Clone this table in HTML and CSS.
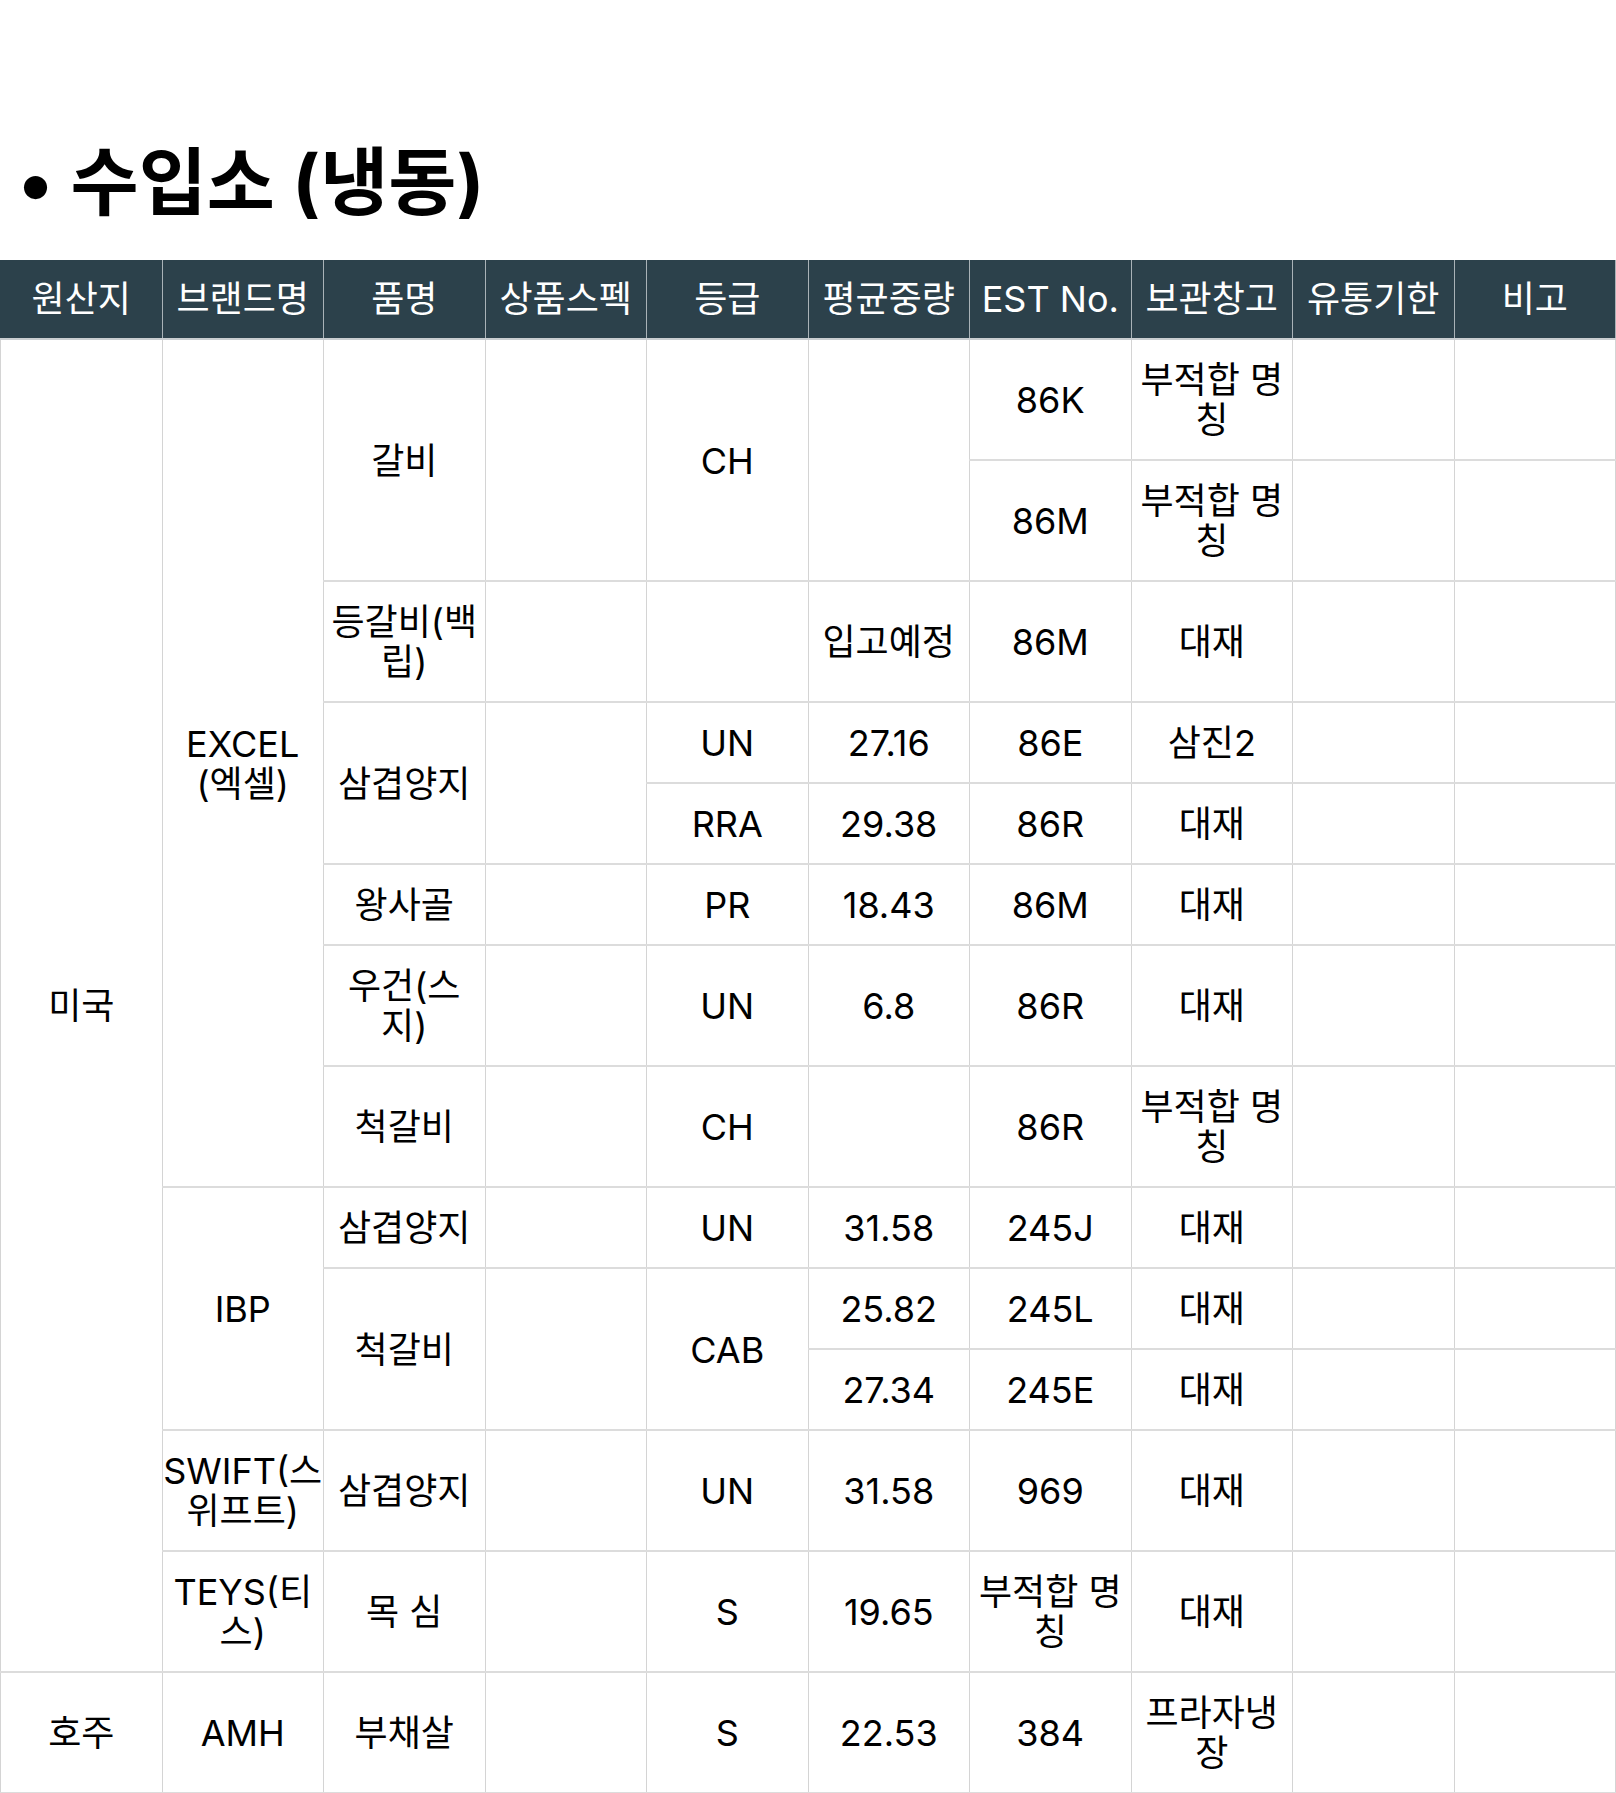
FILE: index.html
```html
<!DOCTYPE html>
<html lang="ko">
<head>
<meta charset="utf-8">
<title>수입소 (냉동)</title>
<link rel="stylesheet" href="styles.css">
</head>
<body>
<h2 class="title">• 수입소 (냉동)</h2>
<table class="stock">
  <colgroup>
    <col><col><col><col><col><col><col><col><col><col>
  </colgroup>
  <thead>
    <tr>
      <th>원산지</th><th>브랜드명</th><th>품명</th><th>상품스펙</th><th>등급</th>
      <th>평균중량</th><th>EST No.</th><th>보관창고</th><th>유통기한</th><th>비고</th>
    </tr>
  </thead>
  <tbody>
    <tr>
      <td rowspan="13">미국</td>
      <td rowspan="8">EXCEL<br>(엑셀)</td>
      <td rowspan="2">갈비</td>
      <td rowspan="2"></td>
      <td rowspan="2">CH</td>
      <td rowspan="2"></td>
      <td>86K</td><td>부적합 명<br>칭</td><td></td><td></td>
    </tr>
    <tr>
      <td>86M</td><td>부적합 명<br>칭</td><td></td><td></td>
    </tr>
    <tr>
      <td>등갈비(백<br>립)</td><td></td><td></td><td>입고예정</td><td>86M</td><td>대재</td><td></td><td></td>
    </tr>
    <tr>
      <td rowspan="2">삼겹양지</td><td rowspan="2"></td><td>UN</td><td>27.16</td><td>86E</td><td>삼진2</td><td></td><td></td>
    </tr>
    <tr>
      <td>RRA</td><td>29.38</td><td>86R</td><td>대재</td><td></td><td></td>
    </tr>
    <tr>
      <td>왕사골</td><td></td><td>PR</td><td>18.43</td><td>86M</td><td>대재</td><td></td><td></td>
    </tr>
    <tr>
      <td>우건(스<br>지)</td><td></td><td>UN</td><td>6.8</td><td>86R</td><td>대재</td><td></td><td></td>
    </tr>
    <tr>
      <td>척갈비</td><td></td><td>CH</td><td></td><td>86R</td><td>부적합 명<br>칭</td><td></td><td></td>
    </tr>
    <tr>
      <td rowspan="3">IBP</td>
      <td>삼겹양지</td><td></td><td>UN</td><td>31.58</td><td>245J</td><td>대재</td><td></td><td></td>
    </tr>
    <tr>
      <td rowspan="2">척갈비</td><td rowspan="2"></td><td rowspan="2">CAB</td><td>25.82</td><td>245L</td><td>대재</td><td></td><td></td>
    </tr>
    <tr>
      <td>27.34</td><td>245E</td><td>대재</td><td></td><td></td>
    </tr>
    <tr>
      <td>SWIFT(스<br>위프트)</td><td>삼겹양지</td><td></td><td>UN</td><td>31.58</td><td>969</td><td>대재</td><td></td><td></td>
    </tr>
    <tr>
      <td>TEYS(티<br>스)</td><td>목 심</td><td></td><td>S</td><td>19.65</td><td>부적합 명<br>칭</td><td>대재</td><td></td><td></td>
    </tr>
    <tr>
      <td>호주</td><td>AMH</td><td>부채살</td><td></td><td>S</td><td>22.53</td><td>384</td><td>프라자냉<br>장</td><td></td><td></td>
    </tr>
  </tbody>
</table>
</body>
</html>
```

FILE: styles.css
```css
html, body {
  margin: 0;
  padding: 0;
  background: #ffffff;
}

body {
  font-family: Inter, "Noto Sans CJK KR", sans-serif;
  color: #000000;
}

.title {
  margin: 0 0 35px;
  padding: 139px 0 0 18px;
  font-family: Inter, "Noto Sans CJK KR", sans-serif;
  font-size: 74px;
  font-weight: 700;
  line-height: 86px;
  white-space: nowrap;
}

.stock {
  width: 100%;
  table-layout: fixed;
  border-collapse: collapse;
  font-size: 36px;
  line-height: 40px;
}

.stock th {
  background: #2c414b;
  color: #ffffff;
  font-weight: 400;
  padding: 19px 0;
  border-left: 1px solid #a9b2b7;
  border-right: 1px solid #a9b2b7;
  border-bottom: 2px solid #c9cdd0;
  white-space: nowrap;
  overflow: hidden;
}

.stock th:first-child {
  border-left: 1px solid #2c414b;
}

.stock td {
  text-align: center;
  vertical-align: middle;
  padding: 20px 0 19px;
  border-left: 1px solid #d4d4d4;
  border-right: 1px solid #d4d4d4;
  border-top: 2px solid #dcdcdc;
  border-bottom: 2px solid #dcdcdc;
  white-space: nowrap;
}
```
